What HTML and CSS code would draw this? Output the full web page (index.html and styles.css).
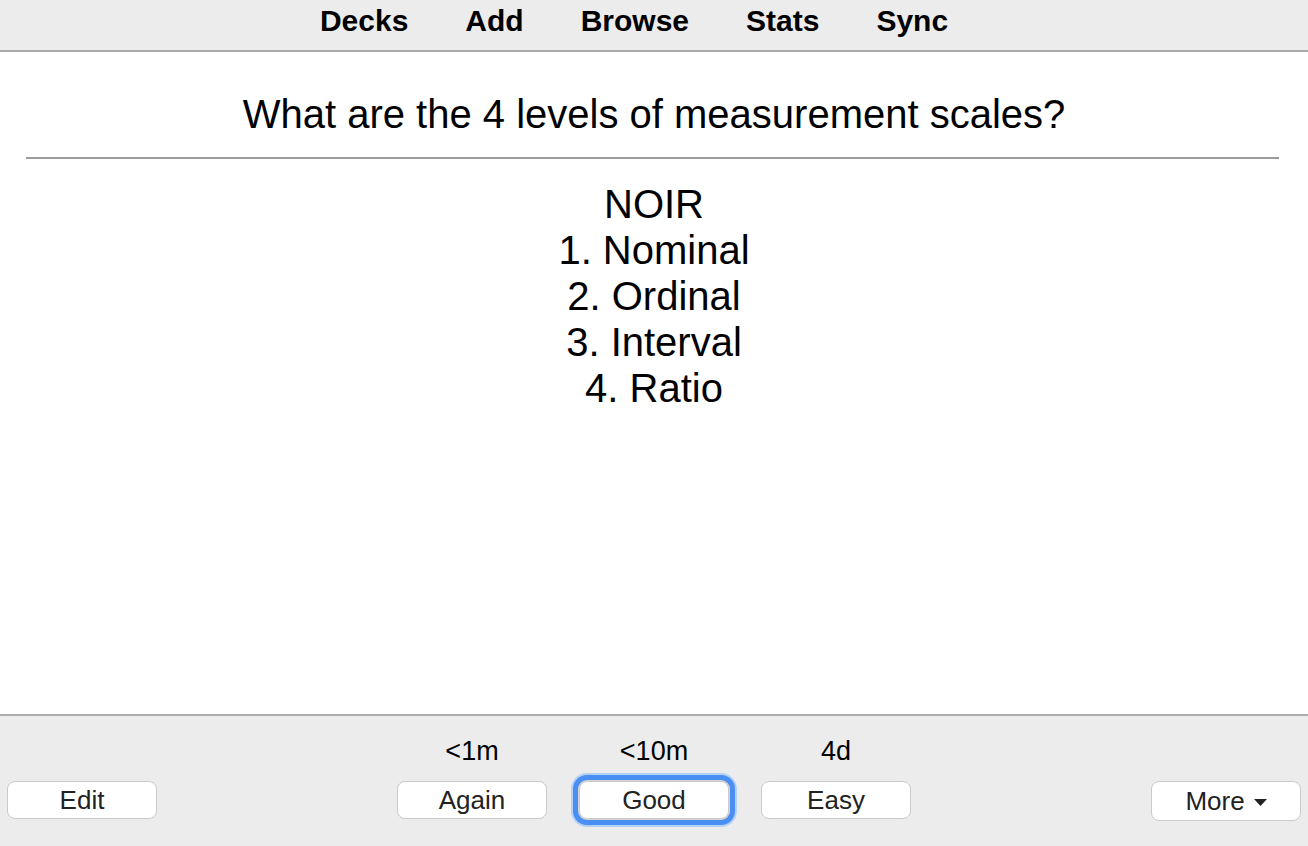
FILE: index.html
```html
<!DOCTYPE html>
<html>
<head>
<meta charset="utf-8">
<link rel="stylesheet" href="styles.css">
</head>
<body>
<header class="topbar">
  <nav class="nav">
    <span class="nav-item">Decks</span>
    <span class="nav-item">Add</span>
    <span class="nav-item">Browse</span>
    <span class="nav-item">Stats</span>
    <span class="nav-item">Sync</span>
  </nav>
</header>
<main class="card">
  <div class="question">What are the 4 levels of measurement scales?</div>
  <hr class="divider">
  <div class="answer">
    <div>NOIR</div>
    <div>1. Nominal</div>
    <div>2. Ordinal</div>
    <div>3. Interval</div>
    <div>4. Ratio</div>
  </div>
</main>
<footer class="bottombar">
  <div class="left-cell">
    <button class="btn">Edit</button>
  </div>
  <div class="answers">
    <div class="ease">
      <span class="time">&lt;1m</span>
      <button class="btn">Again</button>
    </div>
    <div class="ease">
      <span class="time">&lt;10m</span>
      <button class="btn btn-focus">Good</button>
    </div>
    <div class="ease">
      <span class="time">4d</span>
      <button class="btn">Easy</button>
    </div>
  </div>
  <div class="right-cell">
    <button class="btn btn-more">More <svg class="caret" width="13" height="7" viewBox="0 0 13 7"><path d="M0 0 H13 L6.5 7 Z" fill="#222"/></svg></button>
  </div>
</footer>
</body>
</html>
```

FILE: styles.css
```css
html, body {
  margin: 0;
  padding: 0;
  height: 100%;
}
body {
  display: flex;
  flex-direction: column;
  height: 846px;
  overflow: hidden;
  font-family: "Liberation Sans", Arial, Helvetica, sans-serif;
  background: #ffffff;
  color: #000;
}
.topbar {
  height: 50px;
  background: #ececec;
  border-bottom: 2px solid #a9a9a9;
  flex: none;
}
.nav {
  display: flex;
  justify-content: center;
  gap: 57px;
  padding-top: 4px;
  padding-right: 40px;
}
.nav-item {
  font-size: 30px;
  font-weight: bold;
  line-height: 34px;
  color: #000;
}
.card {
  flex: 1;
  padding-top: 39px;
  text-align: center;
  font-size: 40px;
  line-height: 46px;
}
.divider {
  margin: 20px 29px 0 26px;
  border: none;
  height: 2px;
  background: #9c9c9c;
}
.answer {
  margin-top: 22px;
}
.bottombar {
  flex: none;
  height: 132px;
  box-sizing: border-box;
  background: #ececec;
  border-top: 2px solid #acacac;
  display: grid;
  grid-template-columns: 1fr auto 1fr;
  align-items: start;
  padding: 20px 7px 0 7px;
}
.left-cell {
  justify-self: start;
  padding-top: 45px;
}
.right-cell {
  justify-self: end;
  padding-top: 45px;
}
.answers {
  display: flex;
}
.ease {
  width: 182px;
  display: flex;
  flex-direction: column;
  align-items: center;
}
.time {
  font-size: 27px;
  line-height: 30px;
  margin-bottom: 15px;
  color: #000;
}
.btn {
  width: 150px;
  height: 38px;
  box-sizing: border-box;
  background: #ffffff;
  border: 1.5px solid #cbcbcb;
  border-radius: 8px;
  font-family: "Liberation Sans", Arial, Helvetica, sans-serif;
  font-size: 26px;
  color: #222;
  padding: 0;
  display: flex;
  align-items: center;
  justify-content: center;
}
.btn-focus {
  box-shadow: 0 0 0 1px #d4d4d4, 0 0 0 6px #4a8ff4, 0 0 0 8px #b4d0f7;
}
.btn-more {
  height: 40px;
  gap: 9px;
}
.caret {
  display: block;
  margin-top: 3px;
}
```
